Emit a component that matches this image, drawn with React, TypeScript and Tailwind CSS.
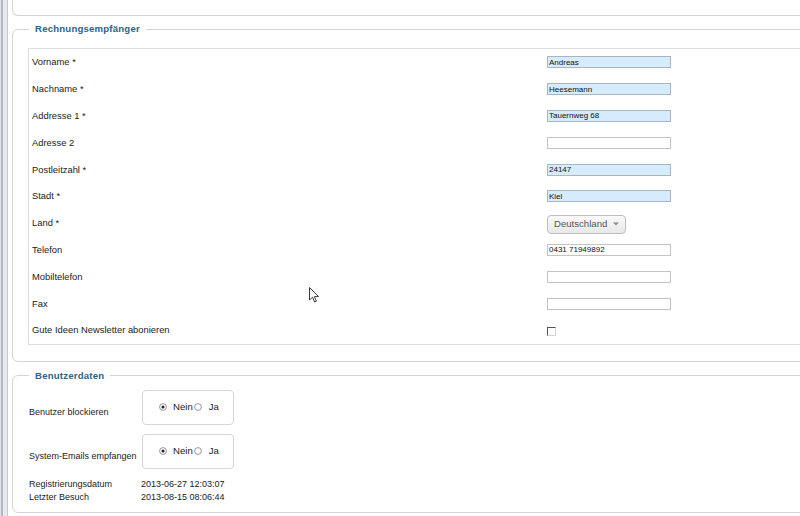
import React from "react";

type Row = {
  label: string;
  kind: "input" | "select" | "checkbox";
  value?: string;
  filled?: boolean;
};

const rows: Row[] = [
  { label: "Vorname *", kind: "input", value: "Andreas", filled: true },
  { label: "Nachname *", kind: "input", value: "Heesemann", filled: true },
  { label: "Addresse 1 *", kind: "input", value: "Tauernweg 68", filled: true },
  { label: "Adresse 2", kind: "input", value: "" },
  { label: "Postleitzahl *", kind: "input", value: "24147", filled: true },
  { label: "Stadt *", kind: "input", value: "Kiel", filled: true },
  { label: "Land *", kind: "select", value: "Deutschland" },
  { label: "Telefon", kind: "input", value: "0431 71949892" },
  { label: "Mobiltelefon", kind: "input", value: "" },
  { label: "Fax", kind: "input", value: "" },
  { label: "Gute Ideen Newsletter abonieren", kind: "checkbox" },
];

function Radio({ checked }: { checked?: boolean }) {
  return (
    <svg width="8" height="8" viewBox="0 0 8 8" className="shrink-0">
      <circle cx="4" cy="4" r="3.4" fill="#fff" stroke="#8a8a8a" strokeWidth="0.9" />
      {checked && <circle cx="4" cy="4" r="1.5" fill="#222" />}
    </svg>
  );
}

function RadioBox() {
  return (
    <div className="w-[92px] h-[35px] border border-[#d6d6d6] rounded-[4px] flex items-center pl-[16px] text-[9.6px] text-[#222]">
      <Radio checked />
      <span className="ml-[6px] mr-[1px]">Nein</span>
      <Radio />
      <span className="ml-[7px]">Ja</span>
    </div>
  );
}

function Field({ row }: { row: Row }) {
  if (row.kind === "select") {
    return (
      <div className="w-[79px] h-[19px] mt-[2px] rounded-[4px] border border-[#bdbdbd] bg-gradient-to-b from-[#fafafa] to-[#e8e8e8] flex items-center justify-between pl-[6px] pr-[6px] text-[9.6px] text-[#555]">
        <span>{row.value}</span>
        <svg width="6" height="4" viewBox="0 0 6 4">
          <path d="M0 0.5 L6 0.5 L3 3.5 Z" fill="#8a8a8a" />
        </svg>
      </div>
    );
  }
  if (row.kind === "checkbox") {
    return (
      <div className="w-[9px] h-[9px] border-t border-l border-t-[#555] border-l-[#555] border-b border-r border-b-[#d4d4d4] border-r-[#d4d4d4] bg-white mt-[2px]" />
    );
  }
  return (
    <input
      readOnly
      defaultValue={row.value}
      className={
        row.filled
          ? "w-[124px] h-[12px] border border-[#a9b6c2] bg-[#d6ebfb] text-[8px] leading-none px-[1px] text-[#111] outline-none"
          : "w-[124px] h-[12px] border border-[#c4c4c4] bg-white text-[8px] leading-none px-[1px] text-[#111] outline-none"
      }
    />
  );
}

export default function App() {
  return (
    <div className="relative w-[800px] h-[516px] overflow-hidden bg-white flex font-['Liberation_Sans',Arial,sans-serif]">
      {/* window edge */}
      <div className="w-[8px] shrink-0 flex">
        <div className="w-[1px] bg-[#dfe4ea]" />
        <div className="w-[2px] bg-[#b3bac4]" />
        <div className="w-[4px] bg-[#e6eaef]" />
        <div className="w-[1px] bg-[#c4cad2]" />
      </div>

      <div className="flex-1 pl-[4px] flex flex-col">
        {/* panel above */}
        <div className="w-[820px] h-[16px] border-l border-b border-[#d4d4d4] rounded-bl-[6px]" />

        {/* Rechnungsempfänger */}
        <fieldset className="w-[820px] mt-[7px] border border-[#d4d4d4] rounded-[6px] pl-[15px] pb-[16px]">
          <legend className="ml-[1px] px-[6px] text-[9.6px] leading-[12px] font-bold text-[#2d6485] tracking-[0.2px]">
            Rechnungsempfänger
          </legend>
          <div className="mt-[13px] border border-[#dcdcdc] pl-[3px]">
            {rows.map((row) => (
              <div key={row.label} className="h-[26.8px] flex items-center">
                <div className="w-[515px] text-[9.4px] text-[#222]">{row.label}</div>
                <Field row={row} />
              </div>
            ))}
          </div>
        </fieldset>

        {/* Benutzerdaten */}
        <fieldset className="w-[820px] mt-[8px] border border-[#d4d4d4] rounded-[6px] pl-[16px] pb-[8px]">
          <legend className="ml-[0px] px-[6px] text-[9.6px] leading-[12px] font-bold text-[#2d6485] tracking-[0.2px]">
            Benutzerdaten
          </legend>
          <div className="mt-[8px] flex flex-col gap-[9px] text-[9px] text-[#222]">
            <div className="flex items-end">
              <div className="w-[113px] pb-[5px]">Benutzer blockieren</div>
              <RadioBox />
            </div>
            <div className="flex items-end">
              <div className="w-[113px] pb-[5px]">System-Emails empfangen</div>
              <RadioBox />
            </div>
          </div>
          <div className="mt-[9px] grid grid-cols-[112px_1fr] text-[9px] leading-[13px] text-[#222]">
            <span>Registrierungsdatum</span>
            <span>2013-06-27 12:03:07</span>
            <span>Letzter Besuch</span>
            <span>2013-08-15 08:06:44</span>
          </div>
        </fieldset>
      </div>

      {/* mouse cursor */}
      <svg
        className="absolute left-[309px] top-[287px]"
        width="11"
        height="17"
        viewBox="0 0 11 17"
      >
        <path
          d="M0.5 0.5 L0.5 13 L3.5 10.2 L5.6 15 L7.4 14.2 L5.4 9.6 L9.5 9.6 Z"
          fill="#fff"
          stroke="#222"
          strokeWidth="0.9"
          strokeLinejoin="round"
        />
      </svg>
    </div>
  );
}
